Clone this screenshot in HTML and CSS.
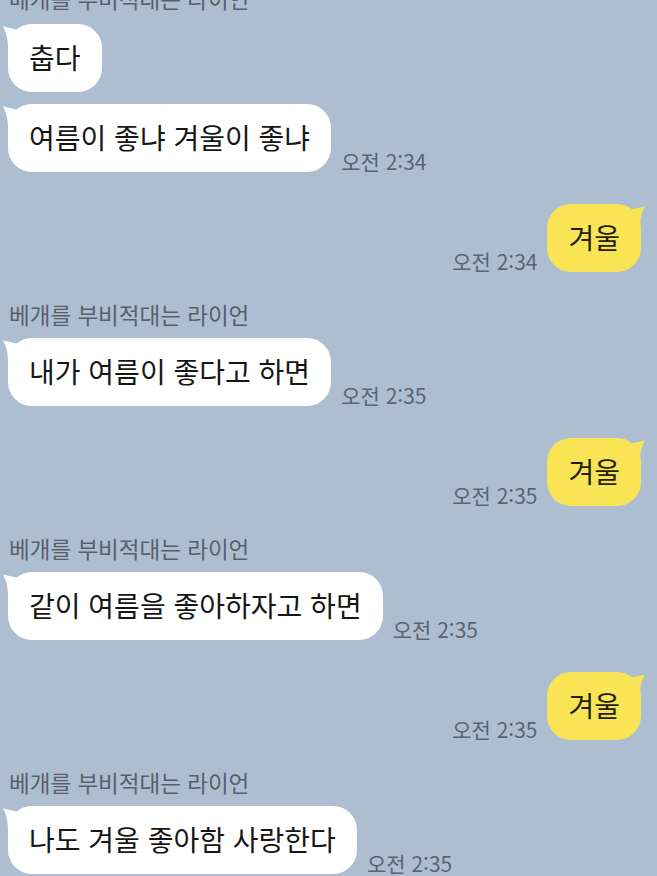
FILE: index.html
```html
<!DOCTYPE html>
<html lang="ko">
<head>
<meta charset="utf-8">
<title>채팅</title>
<link rel="stylesheet" href="styles.css">
</head>
<body>
<main class="chat">
  <div class="name name-first">베개를 부비적대는 라이언</div>
  <div class="row left first-row"><div class="bubble white">춥다</div></div>
  <div class="row left follow"><div class="bubble white">여름이 좋냐 겨울이 좋냐</div><span class="time">오전 2:34</span></div>
  <div class="row right"><span class="time">오전 2:34</span><div class="bubble yellow">겨울</div></div>

  <div class="name">베개를 부비적대는 라이언</div>
  <div class="row left"><div class="bubble white">내가 여름이 좋다고 하면</div><span class="time">오전 2:35</span></div>
  <div class="row right"><span class="time">오전 2:35</span><div class="bubble yellow">겨울</div></div>

  <div class="name">베개를 부비적대는 라이언</div>
  <div class="row left"><div class="bubble white">같이 여름을 좋아하자고 하면</div><span class="time">오전 2:35</span></div>
  <div class="row right"><span class="time">오전 2:35</span><div class="bubble yellow">겨울</div></div>

  <div class="name">베개를 부비적대는 라이언</div>
  <div class="row left"><div class="bubble white">나도 겨울 좋아함 사랑한다</div><span class="time">오전 2:35</span></div>
</main>
</body>
</html>
```
FILE: styles.css
```css
html, body {
  margin: 0;
  padding: 0;
  background: #adbed1;
  height: 100%;
  overflow: hidden;
}

.chat {
  display: flex;
  flex-direction: column;
  font-family: "Noto Sans CJK KR", "Noto Sans", sans-serif;
}

.name {
  margin: 30px 0 12px 9px;
  font-size: 22.5px;
  line-height: 24px;
  color: #56606b;
}

.name-first {
  margin-top: -14px;
  margin-bottom: 14px;
}

.row {
  display: flex;
  align-items: flex-end;
  gap: 10px;
}

.row.left {
  padding-left: 8px;
}

.row.follow {
  margin-top: 12px;
}

.row.right {
  justify-content: flex-end;
  padding-right: 16px;
  margin-top: 32px;
}

.bubble {
  position: relative;
  height: 68px;
  box-sizing: border-box;
  padding: 16px 21px 18px 21px;
  font-size: 28px;
  line-height: 34px;
  border-radius: 24px;
  white-space: nowrap;
}

.bubble.white {
  background: #ffffff;
  color: #161616;
}

.bubble.yellow {
  background: #f8e454;
  color: #241f0c;
}

.bubble.white::before,
.bubble.yellow::before {
  content: "";
  position: absolute;
  top: 0;
  width: 24px;
  height: 30px;
  background: inherit;
}

.bubble.white::before {
  left: -6px;
  clip-path: path("M1 2.5 Q10 4 20 7 L20 30 L6 30 L6 24 C6 14 4 8 1 2.5 Z");
}

.bubble.yellow::before {
  right: -5px;
  clip-path: path("M23 2.5 Q14 4 4 7 L4 30 L18 30 L18 24 C18 14 20 8 23 2.5 Z");
}

.time {
  font-size: 21px;
  line-height: 22px;
  color: #5a6572;
  white-space: nowrap;
  padding-bottom: 0;
}
```
